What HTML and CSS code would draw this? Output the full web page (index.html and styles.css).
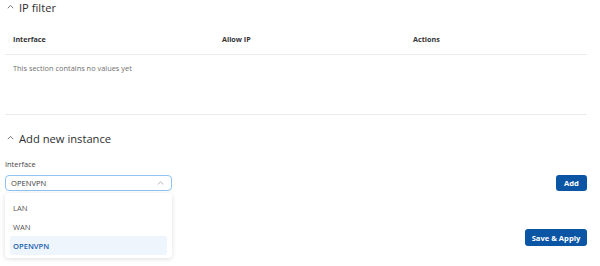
FILE: index.html
```html
<!DOCTYPE html>
<html>
<head>
<meta charset="utf-8">
<link rel="stylesheet" href="styles.css">
</head>
<body>
<div class="page">
  <div class="section-title">
    <svg class="chev" width="7" height="5" viewBox="0 0 7 5"><path d="M0.8 4.2 L3.5 1.4 L6.2 4.2" fill="none" stroke="#666" stroke-width="0.9"/></svg>
    <span>IP filter</span>
  </div>
  <div class="table">
    <div class="thead">
      <div>Interface</div>
      <div>Allow IP</div>
      <div>Actions</div>
    </div>
    <div class="empty">This section contains no values yet</div>
  </div>
  <div class="section-title second">
    <svg class="chev" width="7" height="5" viewBox="0 0 7 5"><path d="M0.8 4.2 L3.5 1.4 L6.2 4.2" fill="none" stroke="#666" stroke-width="0.9"/></svg>
    <span>Add new instance</span>
  </div>
  <div class="label">Interface</div>
  <div class="form-row">
    <div class="select-wrap">
      <div class="select">
        <span>OPENVPN</span>
        <svg width="7" height="4" viewBox="0 0 7 4"><path d="M0.7 3.5 L3.5 0.8 L6.3 3.5" fill="none" stroke="#aaa" stroke-width="0.9"/></svg>
      </div>
      <div class="dropdown">
        <div class="item">LAN</div>
        <div class="item">WAN</div>
        <div class="item active">OPENVPN</div>
      </div>
    </div>
    <button class="btn btn-add">Add</button>
  </div>
  <div class="save-row">
    <button class="btn btn-save">Save &amp; Apply</button>
  </div>
</div>
</body>
</html>
```
FILE: styles.css
```css
* { box-sizing: border-box; }
html, body { margin: 0; padding: 0; background: #fff; }
body {
  font-family: "Open Sans", "Liberation Sans", sans-serif;
  color: #333;
}
.page {
  padding: 0 13px 0 5px;
  min-height: 266px;
}
.section-title {
  height: 14px;
  display: flex;
  align-items: center;
  padding-left: 2px;
  font-size: 11.2px;
  font-weight: 500;
  color: #2f2f2f;
}
.section-title .chev { margin-right: 5px; margin-top: -1px; }
.section-title.second { margin-top: 16px; }
.table { margin-top: 10px; }
.thead {
  display: grid;
  grid-template-columns: 209px 191px 1fr;
  height: 31px;
  align-items: center;
  padding-left: 8px;
  border-bottom: 1px solid #ebebeb;
  font-size: 7.2px;
  font-weight: 700;
  color: #333;
}
.empty {
  height: 60px;
  padding: 8px 0 0 8px;
  border-bottom: 1px solid #ebebeb;
  font-size: 7.4px;
  line-height: 10px;
  color: #6f6f6f;
}
.label {
  margin-top: 14px;
  font-size: 7.4px;
  line-height: 10px;
  color: #444;
}
.form-row {
  margin-top: 6px;
  display: flex;
  justify-content: space-between;
  align-items: flex-start;
}
.select-wrap {
  position: relative;
  width: 167px;
}
.select {
  height: 16px;
  border: 1px solid #8ec3f3;
  border-radius: 4px;
  display: flex;
  align-items: center;
  justify-content: space-between;
  padding: 0 7px 0 5px;
  font-size: 7.6px;
  color: #3d3d3d;
}
.select svg { margin-top: -1px; }
.dropdown {
  position: absolute;
  top: 18px;
  left: 0;
  width: 167px;
  height: 65px;
  padding: 5px 5px 3px;
  background: #fff;
  border-radius: 4px;
  box-shadow: 0 1px 5px rgba(0,0,0,0.13);
  z-index: 5;
}
.item {
  height: 19px;
  display: flex;
  align-items: center;
  padding-left: 3px;
  font-size: 7.6px;
  color: #555;
  border-radius: 3px;
}
.item.active {
  background: #eef5fd;
  color: #1a5fae;
  font-weight: 600;
}
.btn {
  border: 0;
  border-radius: 3px;
  background: #0b55a5;
  color: #fff;
  font-family: "Open Sans", "Liberation Sans", sans-serif;
  font-weight: 700;
  font-size: 7.6px;
  padding: 0;
  display: flex;
  align-items: center;
  justify-content: center;
}
.btn-add { width: 31px; height: 16px; }
.save-row {
  margin-top: 38px;
  display: flex;
  justify-content: flex-end;
}
.btn-save { width: 62px; height: 17px; }
```
